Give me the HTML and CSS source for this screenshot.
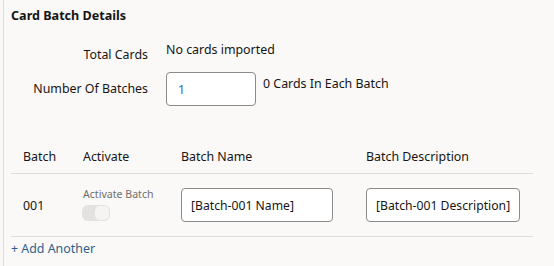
FILE: index.html
```html
<!DOCTYPE html>
<html>
<head>
<meta charset="utf-8">
<link rel="stylesheet" href="styles.css">
</head>
<body>
<div class="panel">
  <h2 class="title">Card Batch Details</h2>
  <div class="form">
    <div class="label label-ro">Total Cards</div>
    <div class="value-ro">No cards imported</div>
    <div class="label label-in">Number Of Batches</div>
    <div class="value-in">
      <input class="input input-num" type="text" value="1">
      <span class="hint">0 Cards In Each Batch</span>
    </div>
  </div>
  <div class="table">
    <div class="thead">
      <div class="cell c1">Batch</div>
      <div class="cell">Activate</div>
      <div class="cell">Batch Name</div>
      <div class="cell">Batch Description</div>
    </div>
    <div class="trow">
      <div class="cell c1">001</div>
      <div class="cell act">
        <span class="act-label">Activate Batch</span>
        <span class="toggle"><span class="knob"></span></span>
      </div>
      <div class="cell"><input class="input input-name" type="text" value="[Batch-001 Name]"></div>
      <div class="cell"><input class="input input-desc" type="text" value="[Batch-001 Description]"></div>
    </div>
  </div>
  <a class="add" href="#">+ Add Another</a>
</div>
</body>
</html>
```
FILE: styles.css
```css
html, body {
  margin: 0;
  padding: 0;
  background: #faf9f8;
  height: 100%;
}
body {
  font-family: "Noto Sans", "Open Sans", sans-serif;
  font-size: 12.4px;
  color: #161513;
}
.panel {
  margin-left: 3px;
  border-left: 1px solid #dedddb;
  padding-left: 7px;
  min-height: 266px;
  box-sizing: border-box;
  padding-top: 6px;
}
.title {
  margin: 0;
  font-size: 12.6px;
  font-weight: 700;
  line-height: 20px;
}
.form {
  display: grid;
  grid-template-columns: 137px auto;
  column-gap: 18px;
  row-gap: 7px;
  margin-top: 14px;
}
.label {
  text-align: right;
  line-height: 20px;
}
.label-ro {
  padding-top: 5px;
}
.value-ro {
  line-height: 20px;
}
.label-in {
  padding-top: 7px;
}
.value-in {
  display: flex;
  align-items: flex-start;
  gap: 7px;
}
.hint {
  line-height: 20px;
  padding-top: 2px;
}
.input {
  box-sizing: border-box;
  height: 34px;
  border: 1px solid #8c8b89;
  border-radius: 4px;
  background: #fff;
  font-family: inherit;
  font-size: 12.2px;
  color: #161513;
  padding: 0 4px 0 9px;
  margin: 0;
  outline: none;
}
.input-num {
  width: 90px;
  padding-left: 11px;
  color: #356a9c;
}
.input-name {
  width: 152px;
}
.input-desc {
  width: 154px;
}
.table {
  margin-top: 33px;
  width: 522px;
}
.thead, .trow {
  display: grid;
  grid-template-columns: 72px 98px 185px 167px;
  align-items: center;
  border-bottom: 1px solid #dedddb;
}
.thead {
  height: 33px;
  padding-top: 1px;
}
.trow {
  height: 62px;
}
.c1 {
  padding-left: 12px;
}
.act {
  display: flex;
  flex-direction: column;
  align-items: flex-start;
  gap: 4px;
  padding-bottom: 2px;
}
.act-label {
  font-size: 10.6px;
  color: #6f6e6c;
  line-height: 14px;
}
.toggle {
  display: block;
  width: 28px;
  height: 16px;
  border-radius: 6px;
  background: #e3e2e0;
  position: relative;
  margin-left: -1px;
}
.knob {
  position: absolute;
  right: 1px;
  top: 1px;
  width: 14px;
  height: 14px;
  border-radius: 5px;
  background: #f5f4f2;
}
.add {
  display: block;
  margin-top: 2px;
  line-height: 20px;
  color: #2f5f8a;
  text-decoration: none;
}
```
